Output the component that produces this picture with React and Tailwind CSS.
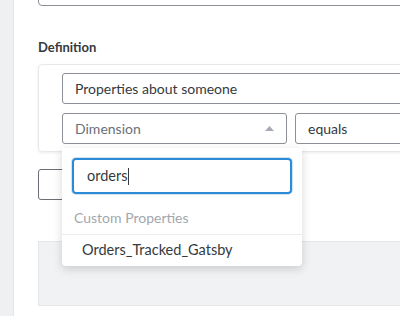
import React from 'react';

export default function App() {
  return (
    <div className="w-[400px] h-[316px] overflow-hidden bg-white flex font-['Lato',sans-serif] text-[#343a40]">
      {/* side rail */}
      <div className="w-[14px] shrink-0 bg-[#eff0f2] border-r border-[#e2e4e7]" />

      <div className="flex-1 pl-[24px] flex flex-col">
        {/* previous field, cut off at top */}
        <div className="-mt-[30px] h-[36px] -mr-4 border border-[#8c9097] rounded" />

        <div className="mt-[32px] h-[18px] text-[13px] font-bold leading-[18px] text-[#343a40]">Definition</div>

        {/* definition card */}
        <div className="mt-[8px] -mr-4 border border-[#e6e8eb] rounded-[4px] shadow-[0_1px_3px_rgba(0,0,0,0.08)] pl-[23px] pt-[8px] pb-[7px] flex flex-col gap-[9px]">
          <div className="h-[31px] border border-[#8c9097] rounded-[3px] flex items-center pl-[12px] text-[14px] text-[#343a40]">
            Properties about someone
          </div>
          <div className="flex gap-[8px]">
            <div className="relative w-[225px] h-[31px]">
              <div className="h-full border border-[#8c9097] rounded-[3px] flex items-center justify-between pl-[12px] pr-[12px] text-[14px] text-[#6b7079]">
                <span>Dimension</span>
                <svg width="9" height="5" viewBox="0 0 9 5" className="-mt-[1px]">
                  <path d="M4.5 0 L9 5 L0 5 Z" fill="#a7abb1" />
                </svg>
              </div>

              {/* dropdown */}
              <div className="absolute left-0 top-[35px] w-[240px] h-[118px] bg-white rounded-b-[4px] shadow-[0_3px_10px_rgba(0,0,0,0.16)] z-10 flex flex-col">
                <div className="px-[10px] pt-[10px]">
                  <div className="h-[36px] rounded-[4px] border-2 border-[#2b8bd6] ring-1 ring-[#cfe5f6] flex items-center pl-[13px] text-[14.5px] text-[#343a40]">
                    <span>orders</span>
                    <span className="w-px h-[17px] bg-[#343a40]" />
                  </div>
                </div>
                <div className="h-[41px] flex items-end pb-[6px] pl-[12px] text-[14px] text-[#a3a7ad] border-b border-[#ebecee]">
                  Custom Properties
                </div>
                <div className="flex-1 flex items-center pl-[20px] pb-[2px] text-[14.5px] text-[#343a40]">
                  Orders_Tracked_Gatsby
                </div>
              </div>
            </div>
            <div className="flex-1 h-[31px] border border-[#8c9097] rounded-[3px] flex items-center pl-[12px] text-[14px] text-[#343a40]">
              equals
            </div>
          </div>
        </div>

        <div className="mt-[17px] w-[80px] h-[31px] border border-[#6b6f75] rounded-[3px]" />

        <div className="mt-[41px] h-[65px] -mr-4 bg-[#f1f2f4] border border-[#e4e6e9]" />
      </div>
    </div>
  );
}
